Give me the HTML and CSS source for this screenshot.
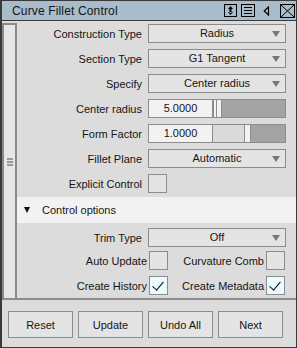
FILE: index.html
```html
<!DOCTYPE html>
<html>
	<head>
		<meta charset="UTF-8">
		<title>Curve Fillet Control</title>
		<link rel="stylesheet" href="styles.css">
	</head>
	<body>
		<div class="win">
			<div class="titlebar">
				<span class="title">Curve Fillet Control</span>
				<div class="tools">
					<svg class="ico" width="13" height="13" viewBox="0 0 13 13"><rect x="0.5" y="0.5" width="12" height="12" fill="none" stroke="#000"/><path d="M6.5 2 L9 5 H4 Z M6.5 11 L9 8 H4 Z M5.5 4 h2 v5 h-2 Z" fill="#000"/></svg>
					<svg class="ico" width="14" height="13" viewBox="0 0 14 13"><rect x="0.5" y="0.5" width="13" height="12" fill="none" stroke="#000"/><path d="M3 3.5 H11 M3 6.5 H11 M3 9.5 H11" stroke="#000"/></svg>
					<svg class="ico tri-ico" width="7" height="10" viewBox="0 0 7 10"><path d="M5.5 1 L1.2 5 L5.5 9 Z" fill="none" stroke="#000" stroke-width="1.2"/></svg>
					<svg class="ico" width="15" height="14" viewBox="0 0 15 14"><rect x="0.5" y="0.5" width="14" height="13" fill="none" stroke="#000"/><path d="M1 1 L14 13 M14 1 L1 13" stroke="#000"/></svg>
				</div>
			</div>
			<div class="main">
				<div class="gutter"><span class="grip"></span></div>
				<div class="panel">
					<div class="row"><span class="lbl">Construction Type</span><div class="select">Radius</div></div>
					<div class="row"><span class="lbl">Section Type</span><div class="select">G1 Tangent</div></div>
					<div class="row"><span class="lbl">Specify</span><div class="select">Center radius</div></div>
					<div class="row">
						<span class="lbl">Center radius</span>
						<div class="field">5.0000</div>
						<div class="slider"><span class="thumb"></span><span class="fill"></span></div>
					</div>
					<div class="row">
						<span class="lbl">Form Factor</span>
						<div class="field">1.0000</div>
						<div class="slider"><span class="track"></span><span class="thumb thin"></span><span class="fill"></span></div>
					</div>
					<div class="row"><span class="lbl">Fillet Plane</span><div class="select">Automatic</div></div>
					<div class="row"><span class="lbl">Explicit Control</span><span class="check"></span></div>
					<div class="section"><span class="arrow"></span>Control options</div>
					<div class="row trim"><span class="lbl">Trim Type</span><div class="select">Off</div></div>
					<div class="pairs">
						<div class="pair"><span class="plbl">Auto Update</span><span class="check"></span></div>
						<div class="pair"><span class="plbl">Curvature Comb</span><span class="check"></span></div>
						<div class="pair"><span class="plbl">Create History</span><span class="check on"></span></div>
						<div class="pair"><span class="plbl">Create Metadata</span><span class="check on"></span></div>
					</div>
				</div>
			</div>
			<div class="footer">
				<button class="btn">Reset</button>
				<button class="btn">Update</button>
				<button class="btn">Undo All</button>
				<button class="btn">Next</button>
			</div>
		</div>
	</body>
</html>
```

FILE: styles.css
```css
*{padding:0;margin:0;box-sizing:border-box;}
body{font-size:11px;font-family:"Liberation Sans",Arial,sans-serif;color:#151515;background:#dcdcdc;}
.win{width:297px;height:348px;border:1px solid #3a3a3a;border-left-width:2px;background:#dcdcdc;display:flex;flex-direction:column;}
.titlebar{height:20px;background:#a9bccc;border-bottom:1px solid #3a3a3a;display:flex;align-items:center;padding-left:10px;}
.title{flex:1;font-size:12px;letter-spacing:0.15px;}
.tools{display:flex;align-items:center;gap:4px;padding-right:1px;}
.tri-ico{margin:0 6px 0 4px;}
.main{height:277px;display:flex;}
.gutter{width:15px;margin-top:2px;border:2px solid #8a8a8a;border-bottom:0;background:#e6e6e6;display:flex;align-items:center;justify-content:center;}
.grip{width:6px;height:8px;border-top:2px solid #999;border-bottom:2px solid #999;position:relative;}
.grip:after{content:"";position:absolute;left:0;right:0;top:1px;height:2px;background:#999;}
.panel{flex:1;display:flex;flex-direction:column;}
.row{height:25px;display:flex;align-items:center;}
.lbl{width:125px;text-align:right;margin-right:6px;white-space:nowrap;}
.select{width:138px;height:19px;border:1px solid #8c8c8c;background:#e4e4e4;text-align:center;line-height:17px;position:relative;}
.select:after{content:"";position:absolute;right:5px;top:6px;border-left:4px solid transparent;border-right:4px solid transparent;border-top:6px solid #777;}
.field{width:65px;height:19px;border:1px solid #8c8c8c;background:#f2f2f2;text-align:center;line-height:17px;}
.slider{width:73px;height:19px;border:1px solid #8c8c8c;border-left:0;display:flex;}
.track{width:31px;background:#dadada;}
.thumb{width:9px;border-left:1px solid #8c8c8c;border-right:1px solid #8c8c8c;background:#f2f2f2;position:relative;}
.thumb:after{content:"";position:absolute;left:2px;top:0;bottom:0;width:1px;background:#8c8c8c;}
.thumb.thin{width:7px;}
.thumb.thin:after{display:none;}
.fill{flex:1;background:#a3a3a3;}
.check{width:19px;height:19px;border:1px solid #8c8c8c;background:#e4e4e4;position:relative;}
.check.on{background:#eafcff;}
.check.on:after{content:"";position:absolute;left:5px;top:2px;width:5px;height:10px;border-right:1px solid #111;border-bottom:1px solid #111;transform:rotate(40deg);}
.section{height:26px;margin-top:1px;background:#f2f2f2;display:flex;align-items:center;padding-left:7px;}
.arrow{border-left:3px solid transparent;border-right:3px solid transparent;border-top:6px solid #111;margin-right:12px;}
.trim{margin-top:2px;}
.pairs{display:grid;grid-template-columns:151px 117px;row-gap:6px;margin-top:1px;}
.pair{display:flex;align-items:center;justify-content:flex-end;gap:2px;}
.footer{flex:1;border-top:2px solid #8c8c8c;display:flex;gap:5px;padding:11px 0 0 6px;}
.btn{width:65px;height:27px;border:1px solid #8c8c8c;background:#e4e4e4;font:inherit;color:#151515;}
```
